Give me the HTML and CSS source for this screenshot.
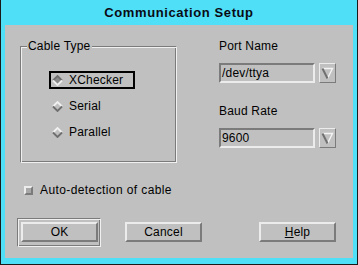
FILE: index.html
```html
<!DOCTYPE html>
<html lang="en">
<head>
  <meta charset="UTF-8" />
  <title>Communication Setup</title>
  <link rel="stylesheet" href="styles.css">
</head>
<body>
  <div class="window">
    <div class="titlebar">Communication Setup</div>
    <div class="panel">
      <div class="top">
        <div class="group">
          <span class="group-label">Cable Type</span>
          <div class="radio focused">
            <svg class="diamond" viewBox="0 0 11 11"><polygon points="5.5,1 10,5.5 5.5,10 1,5.5" fill="#8a8a8a"/><polyline points="1,5.5 5.5,1 10,5.5" fill="none" stroke="#6e6e6e" stroke-width="1.8"/><polyline points="1,5.5 5.5,10 10,5.5" fill="none" stroke="#f0f0f0" stroke-width="1.8"/></svg>
            <span>XChecker</span>
          </div>
          <div class="radio">
            <svg class="diamond" viewBox="0 0 11 11"><polygon points="5.5,1 10,5.5 5.5,10 1,5.5" fill="#c0c0c0"/><polyline points="1,5.5 5.5,1 10,5.5" fill="none" stroke="#f0f0f0" stroke-width="1.8"/><polyline points="1,5.5 5.5,10 10,5.5" fill="none" stroke="#6e6e6e" stroke-width="1.8"/></svg>
            <span>Serial</span>
          </div>
          <div class="radio">
            <svg class="diamond" viewBox="0 0 11 11"><polygon points="5.5,1 10,5.5 5.5,10 1,5.5" fill="#c0c0c0"/><polyline points="1,5.5 5.5,1 10,5.5" fill="none" stroke="#f0f0f0" stroke-width="1.8"/><polyline points="1,5.5 5.5,10 10,5.5" fill="none" stroke="#6e6e6e" stroke-width="1.8"/></svg>
            <span>Parallel</span>
          </div>
        </div>
        <div class="fields">
          <div class="label">Port Name</div>
          <div class="combo">
            <div class="field">/dev/ttya</div>
            <div class="arrow"><svg viewBox="0 0 15 18"><polyline points="2.5,4.5 12.5,4.5 7.5,14.5" fill="none" stroke="#f4f4f4" stroke-width="1.4"/><polyline points="2.5,4.5 7.5,14.5" fill="none" stroke="#707070" stroke-width="2"/></svg></div>
          </div>
          <div class="label second">Baud Rate</div>
          <div class="combo">
            <div class="field">9600</div>
            <div class="arrow"><svg viewBox="0 0 15 18"><polyline points="2.5,4.5 12.5,4.5 7.5,14.5" fill="none" stroke="#f4f4f4" stroke-width="1.4"/><polyline points="2.5,4.5 7.5,14.5" fill="none" stroke="#707070" stroke-width="2"/></svg></div>
          </div>
        </div>
      </div>
      <div class="check">
        <span class="box"></span>
        <span>Auto-detection of cable</span>
      </div>
      <div class="buttons">
        <div class="default-frame"><div class="btn">OK</div></div>
        <div class="btn cancel">Cancel</div>
        <div class="btn help"><u>H</u>elp</div>
      </div>
    </div>
  </div>
</body>
</html>
```

FILE: styles.css
```css
* {
  box-sizing: border-box;
  margin: 0;
  padding: 0;
}
body {
  background: #4fe0f8;
  font-family: 'Liberation Sans', Arial, sans-serif;
  font-size: 12px;
  letter-spacing: 0.2px;
  color: #000;
}
.window {
  width: 358px;
  height: 265px;
  background: #4fe0f8;
  border-left: 1px solid #1a1a1a;
  border-right: 1px solid #1a1a1a;
  border-bottom: 1px solid #1a1a1a;
  display: flex;
  flex-direction: column;
}
.titlebar {
  height: 25px;
  line-height: 25px;
  text-align: center;
  font-weight: bold;
  font-size: 13px;
  letter-spacing: 0.6px;
  color: #0a0a14;
}
.panel {
  margin: 0 4px;
  height: 233px;
  background: #c0c0c0;
  padding-left: 15px;
}
.top {
  display: flex;
  padding-top: 14px;
}
.group {
  position: relative;
  width: 157px;
  height: 117px;
  margin-top: 7px;
  border: 1px solid;
  border-color: #7b7b7b #f0f0f0 #f0f0f0 #7b7b7b;
  box-shadow: inset 1px 1px #f0f0f0, inset -1px -1px #7b7b7b;
  padding: 24px 0 0 28px;
  display: flex;
  flex-direction: column;
  gap: 8px;
}
.group-label {
  position: absolute;
  top: -8px;
  left: 6px;
  padding: 0 1px;
  background: #c0c0c0;
  line-height: 15px;
}
.radio {
  display: flex;
  align-items: center;
  height: 18px;
  width: 86px;
  border: 2px solid transparent;
  padding-left: 1px;
  gap: 6px;
}
.radio.focused {
  border-color: #000;
}
.diamond {
  width: 11px;
  height: 11px;
}
.fields {
  margin-left: 42px;
  width: 117px;
}
.label {
  line-height: 15px;
}
.label.second {
  margin-top: 21px;
}
.combo {
  display: flex;
  gap: 4px;
  margin-top: 9px;
}
.field {
  width: 96px;
  height: 20px;
  border: 2px solid;
  border-color: #7b7b7b #ececec #ececec #7b7b7b;
  line-height: 16px;
  padding-left: 1px;
}
.arrow {
  width: 17px;
  height: 20px;
  border: 1px solid;
  border-color: #ececec #7b7b7b #7b7b7b #ececec;
}
.arrow svg {
  display: block;
  width: 15px;
  height: 18px;
}
.check {
  display: flex;
  align-items: center;
  gap: 7px;
  margin-top: 20px;
  padding-left: 4px;
  line-height: 15px;
  letter-spacing: 0.4px;
}
.box {
  width: 9px;
  height: 9px;
  background: #a8a8a8;
  border: 2px solid;
  border-color: #ececec #7b7b7b #7b7b7b #ececec;
}
.buttons {
  display: flex;
  align-items: flex-start;
  margin-top: 20px;
  margin-left: -3px;
}
.default-frame {
  padding: 2px 1px 3px 2px;
  border: 1px solid;
  border-color: #7b7b7b #f0f0f0 #f0f0f0 #7b7b7b;
  box-shadow: inset 1px 1px #f0f0f0, inset -1px -1px #7b7b7b;
  width: 84px;
  height: 29px;
}
.btn {
  width: 77px;
  height: 20px;
  border: 2px solid;
  border-color: #ececec #7b7b7b #7b7b7b #ececec;
  text-align: center;
  line-height: 16px;
}
.default-frame .btn {
  margin: 1px 0 0 1px;
}
.cancel {
  margin: 4px 0 0 24px;
}
.help {
  margin: 4px 0 0 57px;
}
```
